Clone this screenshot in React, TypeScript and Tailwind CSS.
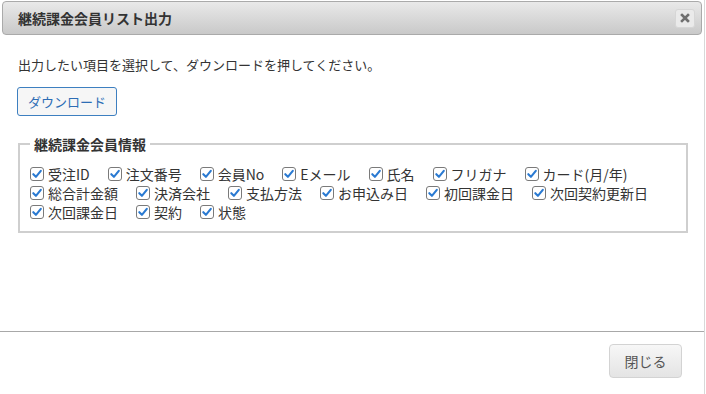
import React from 'react';

const rows: string[][] = [
    ['受注ID', '注文番号', '会員No', 'Eメール', '氏名', 'フリガナ', 'カード(月/年)'],
    ['総合計金額', '決済会社', '支払方法', 'お申込み日', '初回課金日', '次回契約更新日'],
    ['次回課金日', '契約', '状態'],
];

const font = { fontFamily: '"Noto Sans CJK JP", "Noto Sans", sans-serif' };

const CheckBox = () => (
    <span className="w-[14px] h-[14px] shrink-0 rounded-[3px] border border-[#7a7a7a] bg-white flex items-center justify-center">
        <svg width="12" height="12" viewBox="0 0 12 12">
            <path d="M2.3 6.2 L4.9 8.8 L9.8 2.9" fill="none" stroke="#2a7ad2" strokeWidth="2.1" strokeLinecap="round" strokeLinejoin="round" />
        </svg>
    </span>
);

export default function App() {
    return (
        <div className="w-[706px] h-[394px] bg-white text-[#333] overflow-hidden" style={font}>
            <div className="w-[705px] h-full border-r border-[#d8d8d8] flex flex-col">
                {/* title bar */}
                <div className="mx-[2px] mt-[1px] h-[34px] rounded-[4px] border border-[#aaa] bg-gradient-to-b from-[#e9e9e9] to-[#c9c9c9] flex items-center justify-between pl-[15px] pr-[6px]">
                    <span className="text-[14px] font-bold leading-none">継続課金会員リスト出力</span>
                    <button className="w-[20px] h-[19px] rounded-[3px] border border-[#d6d6d6] bg-[#eaeaea] flex items-center justify-center">
                        <svg width="10" height="10" viewBox="0 0 10 10">
                            <path d="M2 2 L8 8 M8 2 L2 8" stroke="#707070" strokeWidth="2.6" strokeLinecap="square" />
                        </svg>
                    </button>
                </div>

                <div className="flex-1 px-[18px] pt-[21px]">
                    <p className="text-[13px] leading-[18px]">出力したい項目を選択して、ダウンロードを押してください。</p>
                    <button className="mt-[13px] -ml-[1px] w-[100px] h-[29px] rounded-[3px] border border-[#3d7fc0] bg-[#f6f6f6] text-[13px] text-[#2d6db5]">
                        ダウンロード
                    </button>

                    <fieldset className="mt-[20px] w-[670px] h-[97px] border-2 border-[#cfcfcf] px-[10px]">
                        <legend className="px-[4px] text-[14px] font-bold leading-[16px]">継続課金会員情報</legend>
                        <div className="mt-[12px] flex flex-col">
                            {rows.map((row, i) => (
                                <div key={i} className="flex items-center h-[19px] gap-[18px]">
                                    {row.map(label => (
                                        <label key={label} className="flex items-center gap-[4px] text-[14px] leading-none">
                                            <CheckBox />
                                            <span>{label}</span>
                                        </label>
                                    ))}
                                </div>
                            ))}
                        </div>
                    </fieldset>
                </div>

                {/* footer */}
                <div className="h-[63px] border-t border-[#a8a8a8] flex justify-end pt-[12px] pr-[22px]">
                    <button className="w-[73px] h-[34px] rounded-[4px] border border-[#d3d3d3] bg-gradient-to-b from-[#f7f7f7] to-[#e4e4e4] text-[14px] text-[#555]">
                        閉じる
                    </button>
                </div>
            </div>
        </div>
    );
}
